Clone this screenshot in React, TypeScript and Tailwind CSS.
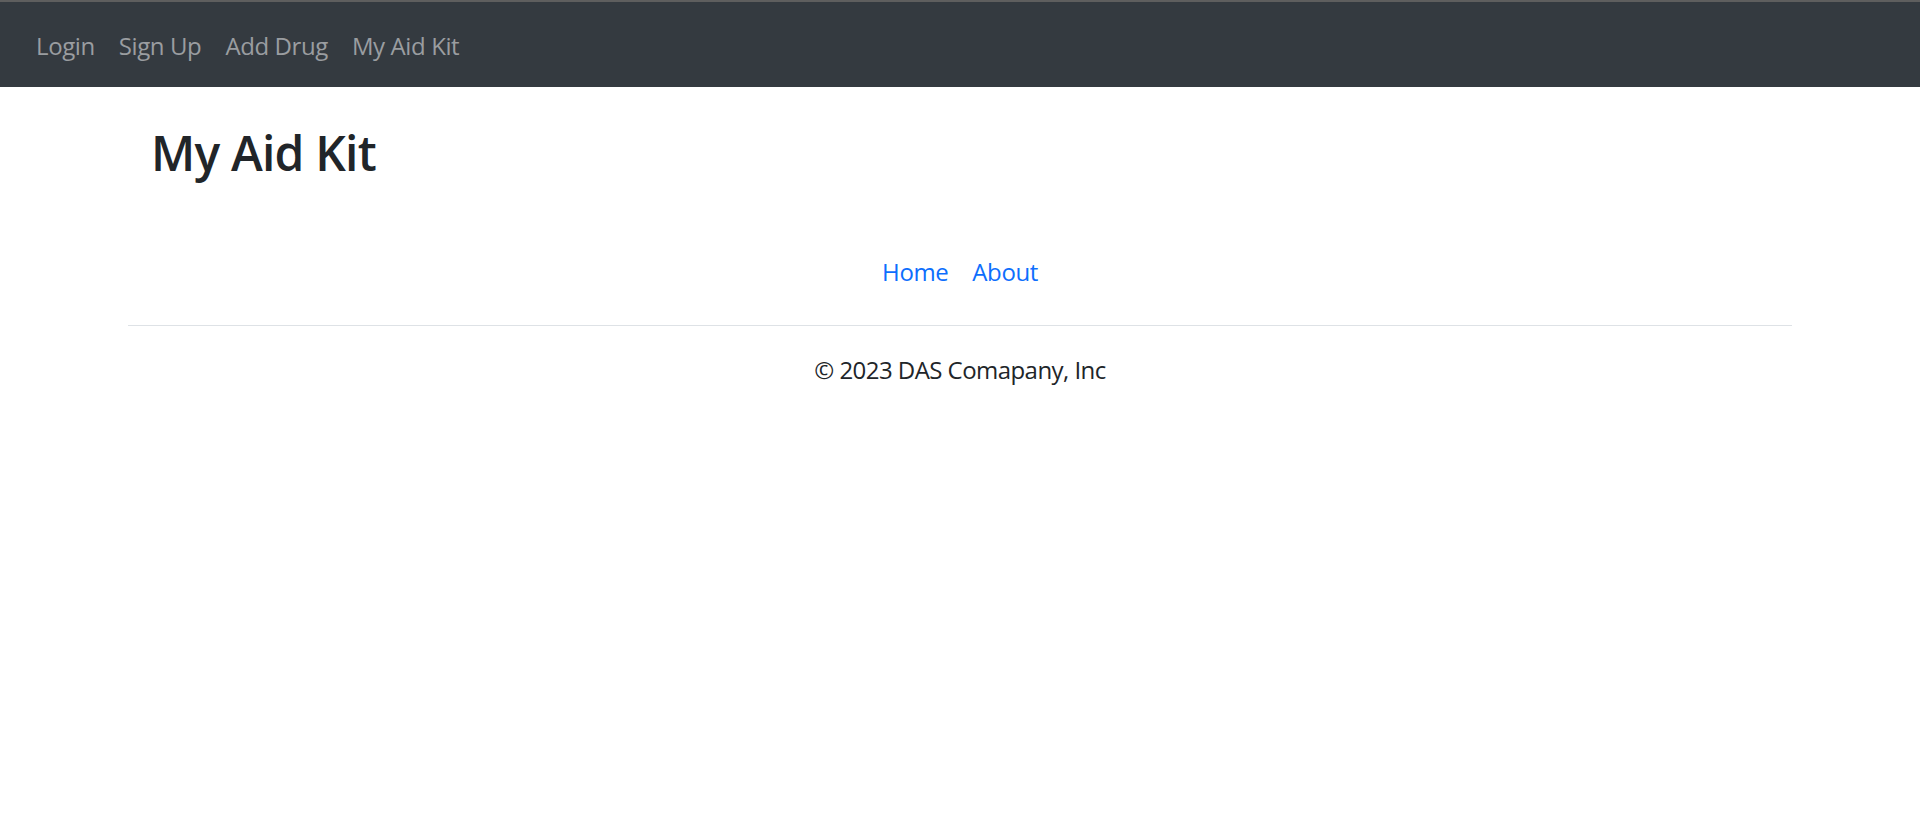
import React from "react";

const navLinks = ["Login", "Sign Up", "Add Drug", "My Aid Kit"];

export default function App() {
  return (
    <div className="min-h-screen bg-white text-[#212529] font-['Open_Sans','Liberation_Sans',sans-serif]">
      <nav className="h-[87px] bg-[#343a40] border-t-2 border-[#5e5e5e] flex items-center px-6 pt-[2px]">
        <ul className="flex items-center">
          {navLinks.map((link) => (
            <li key={link}>
              <a href="#" className="block px-3 text-[24px] leading-[36px] tracking-[-0.4px] text-[#9a9da0]">
                {link}
              </a>
            </li>
          ))}
        </ul>
      </nav>

      <main className="w-[1664px] mx-auto">
        <h1 className="mt-[37px] pl-[23px] text-[48px] leading-[1.2] font-semibold tracking-[-0.8px]">My Aid Kit</h1>

        <footer className="mt-[60px]">
          <ul className="flex justify-center border-b border-[#dee2e6] pb-[23px] mb-[26px]">
            <li>
              <a href="#" className="block px-3 py-3 text-[24px] leading-[36px] tracking-[-0.4px] text-[#0d6efd]">
                Home
              </a>
            </li>
            <li>
              <a href="#" className="block px-3 py-3 text-[24px] leading-[36px] tracking-[-0.4px] text-[#0d6efd]">
                About
              </a>
            </li>
          </ul>
          <p className="text-center text-[24px] leading-[36px] tracking-[-0.55px]">© 2023 DAS Comapany, Inc</p>
        </footer>
      </main>
    </div>
  );
}
